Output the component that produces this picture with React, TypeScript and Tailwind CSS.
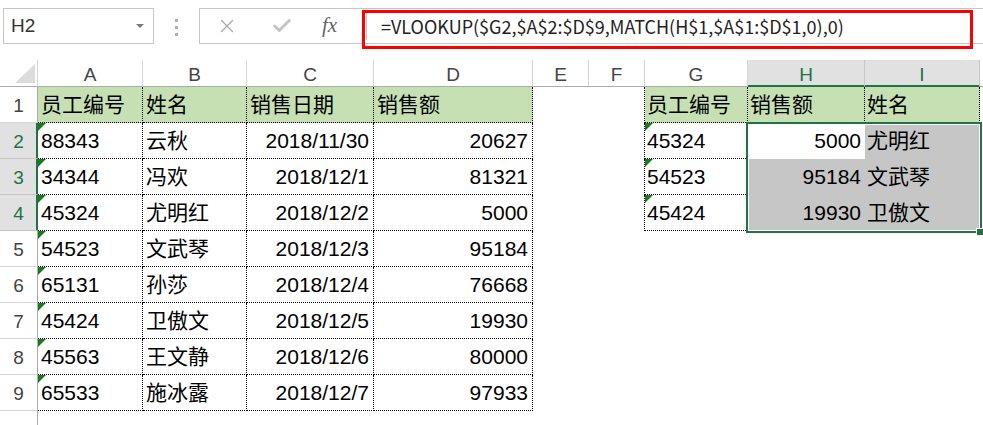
import React from 'react';
import { X, Check } from 'lucide-react';

const font = "font-['Liberation_Sans','Noto_Sans_CJK_SC',sans-serif]";

const rows: string[][] = [
  ['88343', '云秋', '2018/11/30', '20627'],
  ['34344', '冯欢', '2018/12/1', '81321'],
  ['45324', '尤明红', '2018/12/2', '5000'],
  ['54523', '文武琴', '2018/12/3', '95184'],
  ['65131', '孙莎', '2018/12/4', '76668'],
  ['45424', '卫傲文', '2018/12/5', '19930'],
  ['45563', '王文静', '2018/12/6', '80000'],
  ['65533', '施冰露', '2018/12/7', '97933'],
];

const lookup: string[][] = [
  ['45324', '5000', '尤明红'],
  ['54523', '95184', '文武琴'],
  ['45424', '19930', '卫傲文'],
];

const letters = ['A', 'B', 'C', 'D', 'E', 'F', 'G', 'H', 'I'];

const Flag: React.FC = () => (
  <div className="absolute left-0 top-0 w-[8px] h-[8px] bg-[#1b7a1b] [clip-path:polygon(0_0,100%_0,0_100%)]" />
);

const FormulaBar: React.FC = () => (
  <div className="relative h-[60px] flex items-start pt-[8px]">
    <div className="ml-[3px] w-[151px] h-[36px] border border-[#c6c6c6] flex items-center justify-between pl-[7px] pr-[9px]">
      <span className="text-[19px] text-[#333] font-['Liberation_Sans',sans-serif]">H2</span>
      <svg width="8" height="4" viewBox="0 0 8 4">
        <path d="M0 0 L8 0 L4 4 Z" fill="#7a7a7a" />
      </svg>
    </div>
    <div className="ml-[21px] mt-[11px] flex flex-col gap-[4px]">
      <div className="w-[3px] h-[3px] bg-[#b0b0b0]" />
      <div className="w-[3px] h-[3px] bg-[#b0b0b0]" />
      <div className="w-[3px] h-[3px] bg-[#b0b0b0]" />
    </div>
    <div className="ml-[21px] flex-1 h-[36px] border border-r-0 border-[#c6c6c6] flex items-center">
      <div className="w-[166px] flex items-center">
        <X className="ml-[16px]" size={22} strokeWidth={1.4} color="#a8a8a8" />
        <Check className="ml-[33px]" size={22} strokeWidth={3.2} color="#c4c4c4" />
        <span className="ml-[29px] text-[21px] italic text-[#666] font-['Liberation_Serif',serif]">fx</span>
      </div>
      <div className="flex-1 h-[28px] border-l border-[#c6c6c6] flex items-center pl-[14px]">
        <span className="text-[18px] text-[#222] font-['Noto_Sans_CJK_SC',sans-serif]">
          =VLOOKUP($G2,$A$2:$D$9,MATCH(H$1,$A$1:$D$1,0),0)
        </span>
      </div>
    </div>
    <div className="absolute left-[362px] top-[10px] w-[611px] h-[39px] border-[3px] border-[#ff0000]" />
  </div>
);

const App: React.FC = () => {
  const renderRow = (r: number) => {
    const sel = r >= 1 && r <= 3;
    const cells: React.ReactNode[] = [];
    cells.push(
      <div
        key="h"
        className={
          sel
            ? 'h-[36px] flex items-end justify-center pb-[2px] text-[19px] text-[#217346] bg-[#e1e1e1] border-r border-r-[#217346] border-b border-b-[#c6c6c6] shadow-[inset_-1px_0_0_#217346]'
            : 'h-[36px] flex items-end justify-center pb-[2px] text-[19px] text-[#444] border-r border-r-[#ababab] border-b border-b-[#d4d4d4]'
        }
      >
        {r + 1}
      </div>
    );

    // A-D
    for (let c = 0; c < 4; c++) {
      const text = r === 0 ? ['员工编号', '姓名', '销售日期', '销售额'][c] : rows[r - 1][c];
      const right = r > 0 && c >= 2;
      cells.push(
        <div
          key={'c' + c}
          className={
            (r === 0 ? 'bg-[#c6e0b4] ' : '') +
            'relative h-[36px] flex items-center border-r border-b border-dotted border-black ' +
            (right ? 'justify-end pr-[4px]' : 'pl-[3px]')
          }
        >
          {r > 0 && c === 0 && <Flag />}
          <span>{text}</span>
        </div>
      );
    }

    // E, F
    cells.push(<div key="e" className="h-[36px]" />);
    cells.push(
      <div key="f" className={r <= 3 ? 'h-[36px] border-r border-dotted border-black' : 'h-[36px]'} />
    );

    // G-I
    for (let c = 0; c < 3; c++) {
      if (r > 3) {
        cells.push(<div key={'g' + c} className="h-[36px]" />);
        continue;
      }
      const text = r === 0 ? ['员工编号', '销售额', '姓名'][c] : lookup[r - 1][c];
      const inSel = r > 0 && c > 0;
      const shaded = inSel && !(r === 1 && c === 1);
      const edge = r === 0 || c === 0;
      cells.push(
        <div
          key={'g' + c}
          className={
            (r === 0 ? 'bg-[#c6e0b4] ' : shaded ? 'bg-[#c6c6c6] ' : '') +
            'relative h-[36px] flex items-center ' +
            (edge ? 'border-r border-b border-dotted border-black ' : '') +
            (r > 0 && c === 1 ? 'justify-end pr-[4px]' : 'pl-[2px]')
          }
        >
          {r > 0 && c === 0 && <Flag />}
          <span>{text}</span>
        </div>
      );
    }
    cells.push(<div key="z" className="h-[36px]" />);
    return cells;
  };

  return (
    <div className={`w-[983px] h-[425px] overflow-hidden bg-white ${font}`}>
      <FormulaBar />
      <div className="relative">
        <div className="grid grid-cols-[38px_105px_104px_127px_159px_56px_56px_103px_117px_115px_1fr] text-[21px] text-black">
          <div className="h-[27px] flex items-end justify-end pr-[2px] pb-[3px] border-r border-r-[#d4d4d4] border-b border-b-[#ababab]">
            <svg width="20" height="19" viewBox="0 0 20 19">
              <path d="M20 0 L20 19 L0 19 Z" fill="#dcdcdc" />
            </svg>
          </div>
          {letters.map((l) => {
            const sel = l === 'H' || l === 'I';
            return (
              <div
                key={l}
                className={
                  sel
                    ? 'h-[27px] flex items-center justify-center pt-[5px] text-[19px] text-[#217346] bg-[#e1e1e1] border-r border-r-[#c6c6c6] border-b border-b-[#217346] shadow-[inset_0_-1px_0_#217346]'
                    : 'h-[27px] flex items-center justify-center pt-[5px] text-[19px] text-[#444] border-r border-r-[#d4d4d4] border-b border-b-[#ababab]'
                }
              >
                {l}
              </div>
            );
          })}
          <div className="h-[27px] border-b border-b-[#ababab]" />
          {Array.from({ length: 9 }, (_, r) => renderRow(r))}
          <div className="h-[20px] border-r border-r-[#ababab]" />
        </div>
        <div className="absolute left-[746px] top-[62px] w-[236px] h-[111px] border-2 border-[#217346] shadow-[inset_0_0_0_1px_white]" />
        <div className="absolute left-[976px] top-[168px] w-[8px] h-[8px] bg-[#217346] border border-white" />
      </div>
    </div>
  );
};

export default App;
